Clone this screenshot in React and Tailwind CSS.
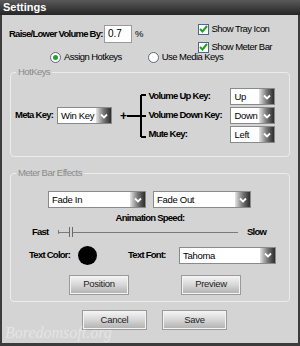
import React from 'react';

const font = { fontFamily: '"Liberation Sans", Arial, sans-serif' };

const Select = ({ value, w }) => (
  <div className={`flex h-[17px] ${w} border border-[#8a8a8a] bg-white`}>
    <span className="flex-1 pl-[3px] text-[9.5px] leading-[15px] tracking-[-0.3px] text-black">{value}</span>
    <span className="flex w-[15px] items-center justify-center bg-gradient-to-r from-[#e6e6e6] via-[#7a7a7a] to-[#2e2e2e]">
      <svg width="8" height="6" viewBox="0 0 8 6">
        <path d="M1 1.5 L4 4.5 L7 1.5" stroke="#fff" strokeWidth="1.8" fill="none" />
      </svg>
    </span>
  </div>
);

const Button = ({ children, w }) => (
  <div className={`flex h-[18px] ${w} items-center justify-center border border-[#f4f4f4] bg-gradient-to-b from-[#f2f2f2] via-[#d6d6d6] to-[#b4b4b4] text-[9.5px] tracking-[-0.3px] text-[#222] shadow-[0_0_0_1px_#9a9a9a]`}>
    {children}
  </div>
);

const Check = ({ label }) => (
  <div className="flex items-center gap-[3px]">
    <span className="flex h-[11px] w-[11px] items-center justify-center border border-[#4a6a8a] bg-white">
      <svg width="9" height="8" viewBox="0 0 9 8">
        <path d="M1 4 L3.5 6.5 L8 1" stroke="#22a022" strokeWidth="2" fill="none" />
      </svg>
    </span>
    <span className="text-black">{label}</span>
  </div>
);

const Radio = ({ label, on }) => (
  <div className="flex items-center gap-[3px]">
    <span className="flex h-[11px] w-[11px] items-center justify-center rounded-full border border-[#5a6a7a] bg-white">
      {on && <span className="h-[5px] w-[5px] rounded-full bg-[#2aa02a]" />}
    </span>
    <span className="text-black">{label}</span>
  </div>
);

const Label = ({ children, className = '' }) => (
  <span className={`font-bold tracking-[-0.75px] text-black ${className}`}>{children}</span>
);

const Group = ({ title, className, children }) => (
  <div className={`relative mx-[8px] rounded-[4px] border border-[#ececec] ${className}`}>
    <span className="absolute left-[5px] top-[-7px] bg-[#d4d4d4] px-[2px] leading-[12px] text-[#8a8a8a]">{title}</span>
    {children}
  </div>
);

export default function App() {
  return (
    <div
      className="relative h-[346px] w-[300px] overflow-hidden whitespace-nowrap bg-[#d4d4d4] text-[9.5px] tracking-[-0.55px]"
      style={font}
    >
      {/* title bar */}
      <div className="h-[15px] bg-gradient-to-b from-[#5a5a5a] to-[#262626] pl-[3px] text-[11px] font-bold leading-[15px] tracking-normal text-white">
        Settings
      </div>
      <div className="flex h-[331px] flex-col border-x-2 border-b-[3px] border-[#3c3c3c]">
        {/* top row */}
        <div className="flex h-[34px] justify-between pl-[7px] pr-[26px] pt-[7px]">
          <div className="mt-[3px] flex h-[18px] items-center">
            <Label className="w-[95px]">Raise/Lower Volume By:</Label>
            <span className="h-[18px] w-[28px] border border-[#9a9a9a] bg-white pl-[3px] text-[10px] leading-[16px] tracking-normal">0.7</span>
            <span className="ml-[3px]">%</span>
          </div>
          <div className="flex flex-col gap-[4px]">
            <Check label="Show Tray Icon" />
            <Check label="Show Meter Bar" />
          </div>
        </div>
        <div className="mt-[2px] flex h-[12px] gap-[26px] pl-[48px]">
          <Radio label="Assign Hotkeys" on />
          <Radio label="Use Media Keys" />
        </div>

        {/* hotkeys */}
        <Group title="HotKeys" className="mt-[9px] h-[85px]">
          <div className="flex items-center pl-[4px] pt-[15px]">
            <Label className="w-[40px]">Meta Key:</Label>
            <span className="ml-[2px]"><Select value="Win Key" w="w-[55px]" /></span>
            <span className="ml-[8px] text-[12px] font-bold">+</span>
            <svg className="ml-[1px]" width="20" height="44" viewBox="0 0 20 44">
              <path d="M0 22 H14 M14 1 V43 M14 1 H19 M14 22 H19 M14 43 H19" stroke="#000" strokeWidth="2" fill="none" />
            </svg>
            <div className="ml-[1px] flex flex-col gap-[2px]">
              {[['Volume Up Key:', 'Up'], ['Volume Down Key:', 'Down'], ['Mute Key:', 'Left']].map(([l, v]) => (
                <div key={l} className="flex items-center">
                  <Label className="w-[82px]">{l}</Label>
                  <Select value={v} w="w-[45px]" />
                </div>
              ))}
            </div>
          </div>
        </Group>

        {/* meter bar effects */}
        <Group title="Meter Bar Effects" className="mt-[16px] h-[129px]">
          <div className="flex gap-[7px] pl-[37px] pt-[17px]">
            <Select value="Fade In" w="w-[98px]" />
            <Select value="Fade Out" w="w-[98px]" />
          </div>
          <div className="mt-[3px] text-center">
            <Label>Animation Speed:</Label>
          </div>
          <div className="flex items-center pl-[21px]">
            <Label className="w-[22px]">Fast</Label>
            <div className="relative ml-[4px] h-[10px] w-[180px]">
              <span className="absolute left-0 top-[5px] h-[1px] w-full bg-[#7a7a7a]" />
              <span className="absolute left-0 top-[3px] h-[4px] w-[1px] bg-[#7a7a7a]" />
              <span className="absolute left-[11px] top-0 h-[10px] w-[4px] border-x border-[#6a6a6a] bg-[#d4d4d4]" />
            </div>
            <Label className="ml-[9px]">Slow</Label>
          </div>
          <div className="mt-[6px] flex items-center pl-[18px]">
            <Label className="w-[46px]">Text Color:</Label>
            <span className="ml-[3px] h-[19px] w-[19px] rounded-full bg-black" />
            <Label className="ml-[31px] w-[46px]">Text Font:</Label>
            <span className="ml-[5px]"><Select value="Tahoma" w="w-[97px]" /></span>
          </div>
          <div className="mt-[11px] flex gap-[54px] pl-[59px]">
            <Button w="w-[58px]">Position</Button>
            <Button w="w-[58px]">Preview</Button>
          </div>
        </Group>

        <div className="mt-[9px] flex gap-[17px] pl-[81px]">
          <Button w="w-[63px]">Cancel</Button>
          <Button w="w-[63px]">Save</Button>
        </div>
      </div>
      <span
        className="absolute bottom-[1px] left-[5px] text-[16px] italic tracking-normal text-white/40"
        style={{ fontFamily: '"Liberation Serif", serif' }}
      >
        Boredomsoft.org
      </span>
    </div>
  );
}
